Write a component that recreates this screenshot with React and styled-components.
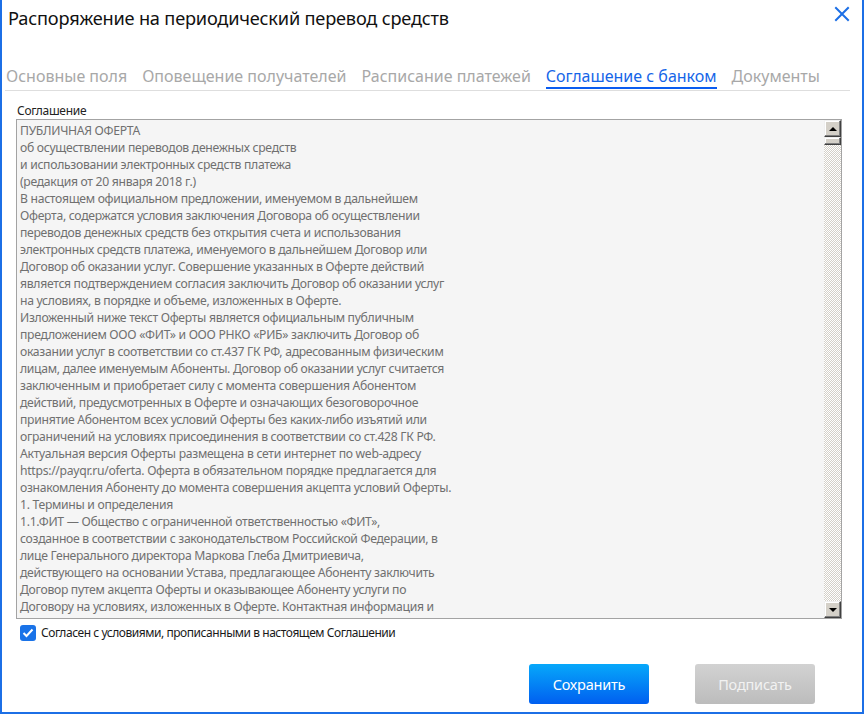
import React from "react";
import styled, { createGlobalStyle } from "styled-components";

const Global = createGlobalStyle`
  html, body { margin: 0; padding: 0; background: #fff; }
  body { font-family: "Noto Sans", "Open Sans", sans-serif; }
  * { box-sizing: border-box; }
`;

const Window = styled.div`
  width: 864px;
  height: 714px;
  border: 2px solid #1c6fe6;
  border-top: none;
  display: flex;
  flex-direction: column;
  background: #fff;
  overflow: hidden;
`;

const Header = styled.div`
  display: flex;
  justify-content: space-between;
  align-items: flex-start;
  padding: 5px 12px 0 6px;
`;

const Title = styled.h1`
  margin: 0;
  font-weight: 400;
  font-size: 18.2px;
  line-height: 26px;
  color: #111;
  letter-spacing: -0.2px;
`;

const CloseButton = styled.button`
  border: none;
  background: none;
  padding: 0;
  margin-top: 1px;
  width: 16px;
  height: 16px;
  cursor: pointer;
  display: flex;
`;

const TabBar = styled.div`
  display: flex;
  gap: 15px;
  margin: 34px 12px 0 3px;
  border-bottom: 1px solid #dedede;
  padding-left: 1px;
`;

const Tab = styled.div`
  font-size: 16px;
  line-height: 22px;
  color: ${(p) => (p.$active ? "#1565e8" : "#a8a8a8")};
  border-bottom: 2px solid ${(p) => (p.$active ? "#0a5cf0" : "transparent")};
  margin-bottom: 1px;
  white-space: nowrap;
`;

const Content = styled.div`
  padding: 12px 20px 0 14px;
  display: flex;
  flex-direction: column;
`;

const FieldLabel = styled.div`
  font-size: 12px;
  line-height: 15px;
  color: #222;
  padding-left: 1px;
  letter-spacing: -0.3px;
`;

const TextBox = styled.div`
  margin-top: 1px;
  height: 500px;
  border: 1px solid #a3a3a3;
  background: #f5f5f5;
  display: flex;
`;

const TextBody = styled.div`
  flex: 1;
  padding: 2px 3px 0 3px;
  font-size: 12.2px;
  line-height: 17px;
  letter-spacing: -0.3px;
  color: #707070;
  white-space: pre;
  overflow: hidden;
`;

const Scrollbar = styled.div`
  width: 17px;
  display: flex;
  flex-direction: column;
  background-color: #f4f4f4;
  background-image: repeating-conic-gradient(#d4d0c8 0 25%, #ffffff 0 50%);
  background-size: 2px 2px;
`;

const ScrollButton = styled.div`
  width: 17px;
  height: 17px;
  background: #d4d0c8;
  border-top: 1px solid #f0f0f0;
  border-left: 1px solid #f0f0f0;
  border-right: 1px solid #404040;
  border-bottom: 1px solid #404040;
  box-shadow: inset -1px -1px 0 #808080, inset 1px 1px 0 #ffffff;
  display: flex;
  align-items: center;
  justify-content: center;
`;

const Thumb = styled(ScrollButton)`
  height: 8px;
`;

const Spacer = styled.div`
  flex: 1;
`;

const Arrow = styled.div`
  width: 0;
  height: 0;
  border-left: 4px solid transparent;
  border-right: 4px solid transparent;
  ${(p) =>
    p.$dir === "up"
      ? "border-bottom: 4px solid #000;"
      : "border-top: 4px solid #000;"}
`;

const CheckRow = styled.label`
  display: flex;
  align-items: center;
  gap: 5px;
  margin-top: 6px;
  padding-left: 4px;
  font-size: 12px;
  line-height: 16px;
  letter-spacing: -0.45px;
  color: #1a1a1a;
`;

const CheckBox = styled.span`
  width: 16px;
  height: 16px;
  border-radius: 3px;
  background: #1a73e8;
  display: flex;
  align-items: center;
  justify-content: center;
`;

const Footer = styled.div`
  display: flex;
  justify-content: flex-end;
  gap: 46px;
  padding: 0 47px 0 0;
  margin-top: 23px;
`;

const Button = styled.button`
  width: 120px;
  height: 40px;
  border: none;
  border-radius: 3px;
  font-family: "Noto Sans", "Open Sans", sans-serif;
  font-size: 14.5px;
  letter-spacing: -0.2px;
  color: ${(p) => (p.$primary ? "#ffffff" : "#f2f2f2")};
  background: ${(p) =>
    p.$primary
      ? "linear-gradient(#07a8fa, #005ff0)"
      : "linear-gradient(#d2d2d2, #bcbcbc)"};
  cursor: pointer;
`;

const lines = [
  "ПУБЛИЧНАЯ ОФЕРТА",
  "об осуществлении переводов денежных средств",
  "и использовании электронных средств платежа",
  "(редакция от 20 января 2018 г.)",
  "В настоящем официальном предложении, именуемом в дальнейшем",
  "Оферта, содержатся условия заключения Договора об осуществлении",
  "переводов денежных средств без открытия счета и использования",
  "электронных средств платежа, именуемого в дальнейшем Договор или",
  "Договор об оказании услуг. Совершение указанных в Оферте действий",
  "является подтверждением согласия заключить Договор об оказании услуг",
  "на условиях, в порядке и объеме, изложенных в Оферте.",
  "Изложенный ниже текст Оферты является официальным публичным",
  "предложением ООО «ФИТ» и ООО РНКО «РИБ» заключить Договор об",
  "оказании услуг в соответствии со ст.437 ГК РФ, адресованным физическим",
  "лицам, далее именуемым Абоненты. Договор об оказании услуг считается",
  "заключенным и приобретает силу с момента совершения Абонентом",
  "действий, предусмотренных в Оферте и означающих безоговорочное",
  "принятие Абонентом всех условий Оферты без каких-либо изъятий или",
  "ограничений на условиях присоединения в соответствии со ст.428 ГК РФ.",
  "Актуальная версия Оферты размещена в сети интернет по web-адресу",
  "https://payqr.ru/oferta. Оферта в обязательном порядке предлагается для",
  "ознакомления Абоненту до момента совершения акцепта условий Оферты.",
  "1. Термины и определения",
  "1.1.ФИТ — Общество с ограниченной ответственностью «ФИТ»,",
  "созданное в соответствии с законодательством Российской Федерации, в",
  "лице Генерального директора Маркова Глеба Дмитриевича,",
  "действующего на основании Устава, предлагающее Абоненту заключить",
  "Договор путем акцепта Оферты и оказывающее Абоненту услуги по",
  "Договору на условиях, изложенных в Оферте. Контактная информация и",
];

const tabs = [
  "Основные поля",
  "Оповещение получателей",
  "Расписание платежей",
  "Соглашение с банком",
  "Документы",
];

export default function App() {
  return (
    <>
      <Global />
      <Window>
        <Header>
          <Title>Распоряжение на периодический перевод средств</Title>
          <CloseButton aria-label="Закрыть">
            <svg width="16" height="16" viewBox="0 0 16 16">
              <path
                d="M2 2 L14 14 M14 2 L2 14"
                stroke="#1c6fe6"
                strokeWidth="2"
                strokeLinecap="square"
              />
            </svg>
          </CloseButton>
        </Header>
        <TabBar>
          {tabs.map((t) => (
            <Tab key={t} $active={t === "Соглашение с банком"}>
              {t}
            </Tab>
          ))}
        </TabBar>
        <Content>
          <FieldLabel>Соглашение</FieldLabel>
          <TextBox>
            <TextBody>{lines.join("\n")}</TextBody>
            <Scrollbar>
              <ScrollButton>
                <Arrow $dir="up" />
              </ScrollButton>
              <Thumb />
              <Spacer />
              <ScrollButton>
                <Arrow $dir="down" />
              </ScrollButton>
            </Scrollbar>
          </TextBox>
          <CheckRow>
            <CheckBox>
              <svg width="12" height="10" viewBox="0 0 12 10">
                <path
                  d="M1.5 5 L4.5 8 L10.5 1.5"
                  stroke="#fff"
                  strokeWidth="2"
                  fill="none"
                />
              </svg>
            </CheckBox>
            Согласен с условиями, прописанными в настоящем Соглашении
          </CheckRow>
        </Content>
        <Footer>
          <Button $primary>Сохранить</Button>
          <Button disabled>Подписать</Button>
        </Footer>
      </Window>
    </>
  );
}
